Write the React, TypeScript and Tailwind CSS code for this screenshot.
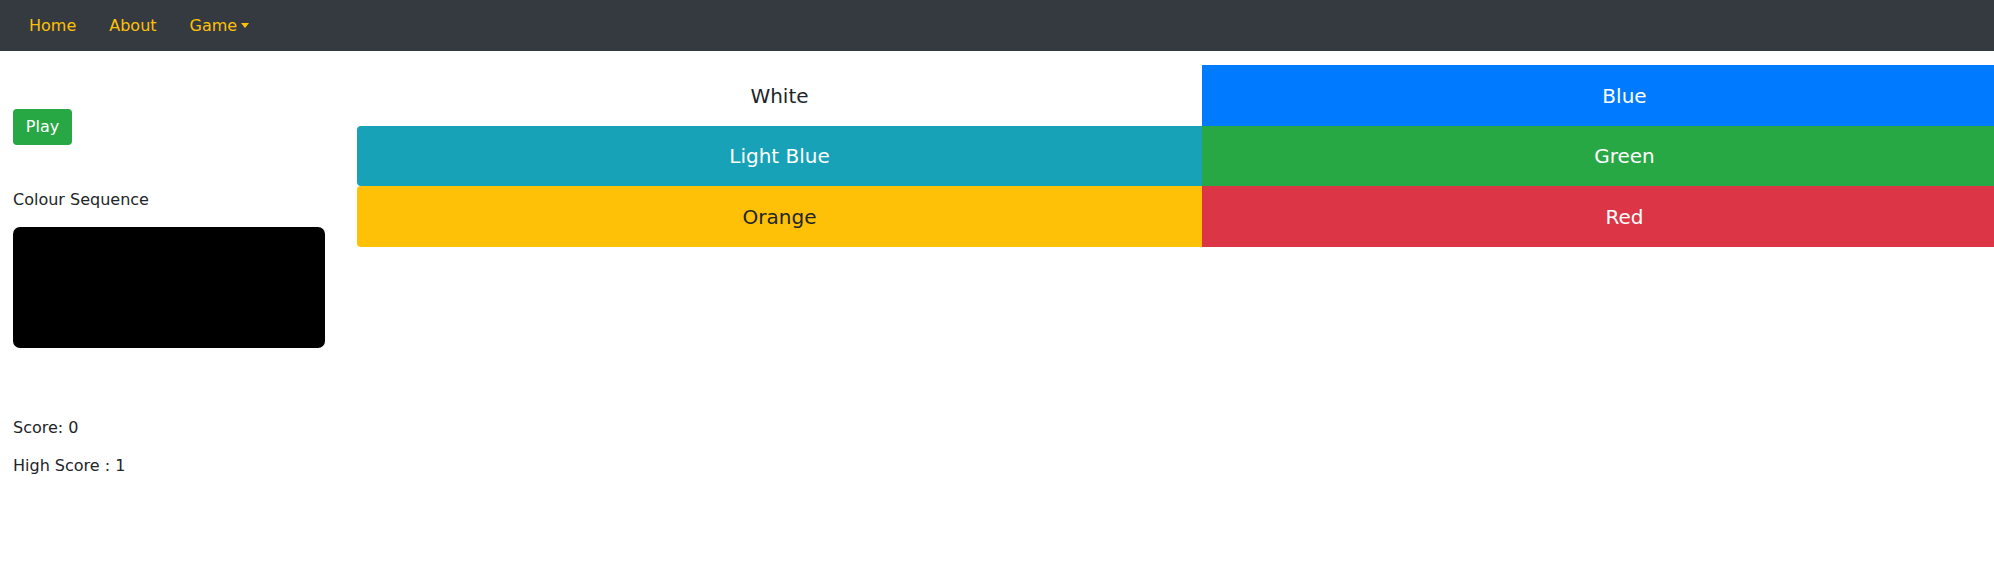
import React from "react";

const rows: { label: string; bg: string; fg: string; h: string; rounded: string }[][] = [
  [
    { label: "White", bg: "bg-white", fg: "text-[#212529]", h: "h-[61px]", rounded: "" },
    { label: "Blue", bg: "bg-[#007bff]", fg: "text-white", h: "h-[61px]", rounded: "" },
  ],
  [
    { label: "Light Blue", bg: "bg-[#17a2b8]", fg: "text-white", h: "h-[60px]", rounded: "rounded-l-[4px]" },
    { label: "Green", bg: "bg-[#28a745]", fg: "text-white", h: "h-[60px]", rounded: "" },
  ],
  [
    { label: "Orange", bg: "bg-[#ffc107]", fg: "text-[#212529]", h: "h-[61px]", rounded: "rounded-l-[4px]" },
    { label: "Red", bg: "bg-[#dc3545]", fg: "text-white", h: "h-[61px]", rounded: "" },
  ],
];

export default function App() {
  return (
    <div className="w-[1994px] h-[578px] overflow-hidden bg-white font-['DejaVu_Sans',sans-serif] text-[#212529]">
      <nav className="h-[51px] bg-[#343a40] flex items-center pl-[29px] text-[16px] text-[#ffc107]">
        <span className="leading-6">Home</span>
        <span className="leading-6 ml-[33px]">About</span>
        <span className="leading-6 ml-[33px] flex items-center">
          Game
          <span className="ml-[4px] inline-block w-0 h-0 border-l-[4.5px] border-r-[4.5px] border-t-[5px] border-l-transparent border-r-transparent border-t-[#ffc107]" />
        </span>
      </nav>
      <div className="flex">
        <div className="ml-[13px] w-[312px] flex flex-col items-start text-[16px]">
          <button className="mt-[58px] h-[36px] w-[59px] flex items-center justify-center rounded-[4px] bg-[#28a745] text-white leading-6">
            Play
          </button>
          <p className="mt-[43px] leading-6">Colour Sequence</p>
          <div className="mt-[15px] w-[312px] h-[121px] bg-black rounded-[7px]" />
          <p className="mt-[68px] leading-6">Score: 0</p>
          <p className="mt-[14px] leading-6">High Score : 1</p>
        </div>
        <div className="ml-[32px] mt-[14px] flex flex-col shrink-0">
          {rows.map((row, i) => (
            <div key={i} className="flex">
              {row.map((b) => (
                <div
                  key={b.label}
                  className={`w-[845px] shrink-0 flex items-center justify-center text-[20px] leading-[30px] ${b.h} ${b.bg} ${b.fg} ${b.rounded}`}
                >
                  {b.label}
                </div>
              ))}
            </div>
          ))}
        </div>
      </div>
    </div>
  );
}
